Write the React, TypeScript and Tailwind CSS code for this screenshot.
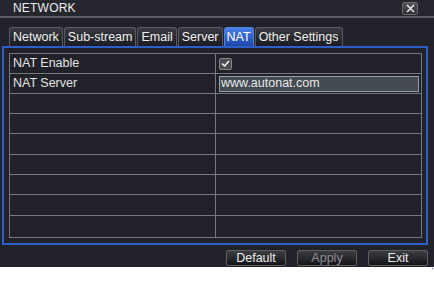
import React from "react";

const tabs = ["Network", "Sub-stream", "Email", "Server", "NAT", "Other Settings"];
const rowHeights = [20, 20, 20, 20, 21, 20, 20, 21, 21];

export default function App() {
  return (
    <div className="w-[434px] h-[283px] bg-white font-['Liberation_Sans',Arial,sans-serif] text-[12.5px] leading-none">
      <div className="h-[267px] bg-[#212229] flex flex-col">
        {/* title bar */}
        <div className="h-[16px] flex items-center justify-between bg-[#26272e] rounded-tl-[3px] pl-[13px] pr-[16px]">
          <span className="text-[12px] text-[#ececec] tracking-[0.2px]">NETWORK</span>
          <div className="w-[16px] h-[13px] mt-[1px] rounded-[2px] bg-gradient-to-b from-[#55565c] to-[#2e2f34] border border-[#6a6b70] flex items-center justify-center">
            <svg width="9" height="9" viewBox="0 0 9 9">
              <path d="M1 1 L8 8 M8 1 L1 8" stroke="#e6e6e6" strokeWidth="1.6" />
            </svg>
          </div>
        </div>
        <div className="h-[2px] bg-[#5b5d62]" />
        {/* tabs */}
        <div className="mt-[9px] h-[19px] flex pl-[9px] gap-[1px]">
          {tabs.map((t) => (
            <div
              key={t}
              className={
                t === "NAT"
                  ? "h-[19px] px-[2px] flex items-center rounded-t-[3px] border border-b-0 border-[#4f7fe0] bg-gradient-to-b from-[#4a7fe6] to-[#1d47a8] text-white"
                  : "h-[19px] px-[3px] flex items-center rounded-t-[3px] border border-b-0 border-[#5a5b61] bg-gradient-to-b from-[#3a3b42] to-[#1b1c21] text-[#f0f0f0]"
              }
            >
              {t}
            </div>
          ))}
        </div>
        {/* blue framed panel */}
        <div className="ml-[2px] w-[426px] h-[199px] border-2 border-[#2d5fc9] pt-[5px] pl-[5px]">
          <div className="w-[413px] border border-[#76777b] flex flex-col">
            {rowHeights.map((h, i) => (
              <div
                key={i}
                className={
                  "flex " + (i < rowHeights.length - 1 ? "border-b border-[#76777b]" : "")
                }
                style={{ height: h }}
              >
                <div className="w-[206px] border-r border-[#76777b] flex items-center pl-[3px] text-[#e4e4e4]">
                  {i === 0 ? "NAT Enable" : i === 1 ? "NAT Server" : ""}
                </div>
                <div className="flex-1 flex items-center pl-[3px]">
                  {i === 0 && (
                    <div className="w-[13px] h-[12px] rounded-[2px] bg-[#4a4c52] border border-[#85868a] flex items-center justify-center">
                      <svg width="9" height="7" viewBox="0 0 9 7">
                        <path d="M1 3.5 L3.5 6 L8 1" stroke="#f2f2f2" strokeWidth="1.5" fill="none" />
                      </svg>
                    </div>
                  )}
                  {i === 1 && (
                    <div className="w-[200px] h-[16px] bg-[#434a52] border border-[#9a9ca0] flex items-center pl-[1px] text-[#e8e8e8]">
                      www.autonat.com
                    </div>
                  )}
                </div>
              </div>
            ))}
          </div>
        </div>
        {/* buttons */}
        <div className="mt-[5px] flex justify-end gap-[11px] pr-[6px]">
          {["Default", "Apply", "Exit"].map((b) => (
            <div
              key={b}
              className={
                "w-[60px] h-[16px] rounded-[2px] border border-[#5e5f63] bg-gradient-to-b from-[#3d3e43] to-[#141518] flex items-center justify-center " +
                (b === "Apply" ? "text-[#8c8d90]" : "text-[#ececec]")
              }
            >
              {b}
            </div>
          ))}
        </div>
      </div>
      <div className="flex justify-end pr-[1px] mt-[1px]">
        <div className="w-[1px] h-[1px] bg-[#3060d0]" />
      </div>
    </div>
  );
}
